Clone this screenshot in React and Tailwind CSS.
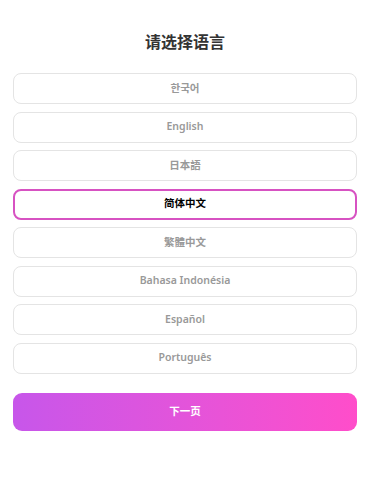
import { useState } from "react";

const languages = [
  "한국어",
  "English",
  "日本語",
  "简体中文",
  "繁體中文",
  "Bahasa Indonésia",
  "Español",
  "Português",
];

const App = () => {
  const [selected, setSelected] = useState("简体中文");

  return (
    <div
      className="min-h-[501px] bg-white pl-[13px] pr-[17px] pt-[30px]"
      style={{ fontFamily: '"Noto Sans", "Noto Sans CJK SC", sans-serif' }}
    >
      <h1 className="text-center text-[16px] leading-[24px] font-bold text-[#333]">
        请选择语言
      </h1>
      <div className="mt-[19px] flex flex-col gap-[7.5px]">
        {languages.map((lang) => {
          const active = lang === selected;
          return (
            <button
              key={lang}
              onClick={() => setSelected(lang)}
              className={
                active
                  ? "h-[31px] w-full rounded-[8px] border-2 border-[#d752c2] bg-white text-[10.5px] font-bold text-black"
                  : "h-[31px] w-full rounded-[8px] border-[1.5px] border-[#e4e4e4] bg-white text-[10.5px] font-semibold text-[#999]"
              }
            >
              {lang}
            </button>
          );
        })}
      </div>
      <button className="mt-[19.5px] h-[38px] w-full rounded-[9px] bg-gradient-to-r from-[#c756ea] to-[#ff4dca] text-[10.5px] font-bold text-white">
        下一页
      </button>
    </div>
  );
};

export default App;
